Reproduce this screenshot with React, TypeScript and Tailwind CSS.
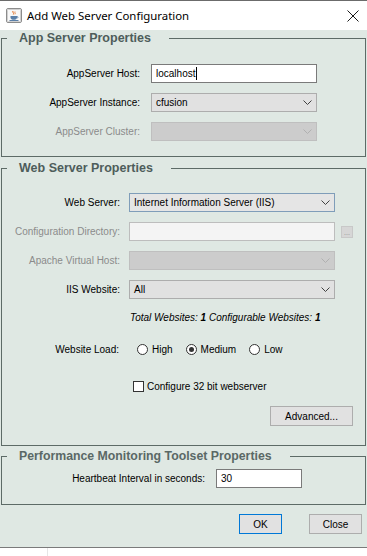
import clsx from "clsx";

const sans = "font-['Liberation_Sans',Arial,sans-serif]";

function Chevron({ disabled }: { disabled?: boolean }) {
  return (
    <svg width="9" height="5" viewBox="0 0 9 5" className="ml-auto shrink-0">
      <polyline
        points="0.5,0.5 4.5,4.5 8.5,0.5"
        fill="none"
        stroke={disabled ? "#b0b0b0" : "#404040"}
        strokeWidth="1"
      />
    </svg>
  );
}

function Select({
  value,
  disabled,
  focused,
  className
}: {
  value?: string;
  disabled?: boolean;
  focused?: boolean;
  className?: string;
}) {
  return (
    <div
      className={clsx(
        "flex h-[19px] items-center border pl-[4px] pr-[4px]",
        disabled
          ? "border-[#bfbfbf] bg-[#cccccc]"
          : focused
            ? "border-[#7f9db9] bg-[#e5e5e5]"
            : "border-[#adadad] bg-[#e1e1e1]",
        className
      )}
    >
      <span className="text-black">{value}</span>
      <Chevron disabled={disabled} />
    </div>
  );
}

function Radio({ checked, label }: { checked?: boolean; label: string }) {
  return (
    <div className="flex items-center">
      <div className="flex h-[11px] w-[11px] items-center justify-center rounded-full border border-[#333333] bg-white">
        {checked && <div className="h-[5px] w-[5px] rounded-full bg-[#333333]" />}
      </div>
      <span className="ml-[4px]">{label}</span>
    </div>
  );
}

function Legend({ children, className }: { children: React.ReactNode; className?: string }) {
  return (
    <legend className={clsx("ml-[5px] pl-[12px] pr-[18px] leading-[16px] text-[#4e5d5b]", className)}>
      {children}
    </legend>
  );
}

function JavaIcon() {
  return (
    <svg width="16" height="15" viewBox="0 0 16 15">
      <rect x="0.5" y="0.5" width="15" height="14" rx="1.5" fill="#eeeeee" stroke="#8c8c8c" />
      <rect x="1.5" y="1.5" width="13" height="12" rx="1" fill="#f8f8f8" stroke="#d0d0d0" />
      <path d="M7 3 C6 4.5 8.5 5 7.3 6.5" fill="none" stroke="#e06a1c" strokeWidth="1" />
      <path d="M9 3.5 C8.3 4.6 9.8 5 9 6.3" fill="none" stroke="#e06a1c" strokeWidth="0.8" />
      <path d="M4.5 8 H11 V9.5 C11 11 9.5 11.8 7.8 11.8 C6 11.8 4.5 11 4.5 9.5 Z" fill="#5a7fa8" />
      <path d="M11 8.5 C12.5 8.5 12.5 10 11 10" fill="none" stroke="#5a7fa8" strokeWidth="0.8" />
      <rect x="3.5" y="12" width="9" height="1" fill="#5a7fa8" />
    </svg>
  );
}

export default function App() {
  return (
    <div className={clsx("h-[556px] w-[367px] overflow-hidden bg-white text-[10px] text-black", sans)}>
      <div className="border-t border-[#6b6b6b]" />
      {/* title bar */}
      <div className="flex h-[29px] items-center pl-[6px] pr-[8px]">
        <JavaIcon />
        <span className="ml-[5px] font-['Noto_Sans',sans-serif] text-[11.4px] text-black">
          Add Web Server Configuration
        </span>
        <svg width="12" height="12" viewBox="0 0 12 12" className="ml-auto">
          <path d="M0.5 0.5 L11.5 11.5 M11.5 0.5 L0.5 11.5" stroke="#1a1a1a" strokeWidth="1" />
        </svg>
      </div>

      {/* body */}
      <div className="flex h-[518px] flex-col border-b border-[#7a7a7a] bg-[#dfe8e3]">
        <fieldset className="mx-[1px] border border-[#5d6b67] pb-[15px] pt-[18px]">
          <Legend className="text-[12.5px] font-bold">App Server Properties</Legend>
          <div className="flex flex-col gap-[10px]">
            <div className="flex items-center">
              <span className="w-[138px] text-right">AppServer Host:</span>
              <div className="ml-[11px] flex h-[19px] w-[166px] items-center border border-[#7a7a7a] bg-white pl-[4px]">
                <span>localhost</span>
                <span className="ml-[1px] h-[13px] w-[1px] bg-black" />
              </div>
            </div>
            <div className="flex items-center">
              <span className="w-[138px] text-right">AppServer Instance:</span>
              <Select value="cfusion" className="ml-[11px] w-[166px]" />
            </div>
            <div className="flex items-center">
              <span className="w-[138px] text-right text-[#8b8b8b]">AppServer Cluster:</span>
              <Select disabled className="ml-[11px] w-[166px]" />
            </div>
          </div>
        </fieldset>

        <fieldset className="mx-[1px] mt-[3px] flex flex-col border border-[#5d6b67] pb-[19px] pt-[17px]">
          <Legend className="text-[12.5px] font-bold">Web Server Properties</Legend>
          <div className="flex flex-col gap-[10px]">
            <div className="flex items-center">
              <span className="w-[118px] text-right">Web Server:</span>
              <Select value="Internet Information Server (IIS)" focused className="ml-[9px] w-[206px]" />
            </div>
            <div className="flex items-center">
              <span className="w-[118px] text-right text-[#8b8b8b]">Configuration Directory:</span>
              <div className="ml-[9px] h-[19px] w-[206px] border border-[#bdbdbd] bg-[#f4f4f4]" />
              <div className="ml-[6px] flex h-[12px] w-[12px] items-end justify-center border border-[#c8c8c8] bg-[#d6d6d6] text-[7px] leading-[8px] text-[#8a8a8a]">
                ...
              </div>
            </div>
            <div className="flex items-center">
              <span className="w-[118px] text-right text-[#8b8b8b]">Apache Virtual Host:</span>
              <Select disabled className="ml-[9px] w-[206px]" />
            </div>
            <div className="flex items-center">
              <span className="w-[118px] text-right">IIS Website:</span>
              <Select value="All" className="ml-[9px] w-[206px]" />
            </div>
          </div>

          <div className="ml-[128px] mt-[12px] italic leading-[13px]">
            Total Websites: <b>1</b> Configurable Websites: <b>1</b>
          </div>

          <div className="mt-[18px] flex h-[14px] items-center">
            <span className="w-[117px] text-right">Website Load:</span>
            <div className="ml-[18px] flex items-center gap-[13px]">
              <Radio label="High" />
              <Radio label="Medium" checked />
              <Radio label="Low" />
            </div>
          </div>

          <div className="ml-[131px] mt-[23px] flex h-[14px] items-center">
            <div className="h-[11px] w-[11px] border border-[#333333] bg-white" />
            <span className="ml-[3px]">Configure 32 bit webserver</span>
          </div>

          <button className="mr-[12px] mt-[13px] h-[20px] w-[83px] self-end border border-[#adadad] bg-[#e1e1e1]">
            Advanced...
          </button>
        </fieldset>

        <fieldset className="mx-[1px] mt-[2px] border border-[#5d6b67] pb-[16px] pt-[5px]">
          <Legend className="text-[12.3px] font-bold text-[#5a6866]">
            Performance Monitoring Toolset Properties
          </Legend>
          <div className="flex items-center">
            <span className="w-[203px] text-right">Heartbeat Interval in seconds:</span>
            <div className="ml-[11px] flex h-[19px] w-[86px] items-center border border-[#7a7a7a] bg-white pl-[4px]">
              30
            </div>
          </div>
        </fieldset>

        <div className="mr-[5px] mt-[9px] flex justify-end gap-[27px]">
          <button className="h-[20px] w-[43px] border border-[#0078d7] bg-[#e1e1e1]">OK</button>
          <button className="h-[20px] w-[53px] border border-[#adadad] bg-[#e1e1e1]">Close</button>
        </div>
      </div>
      <div className="ml-[47px] h-[9px] w-[1px] bg-[#e6e6e6]" />
    </div>
  );
}
